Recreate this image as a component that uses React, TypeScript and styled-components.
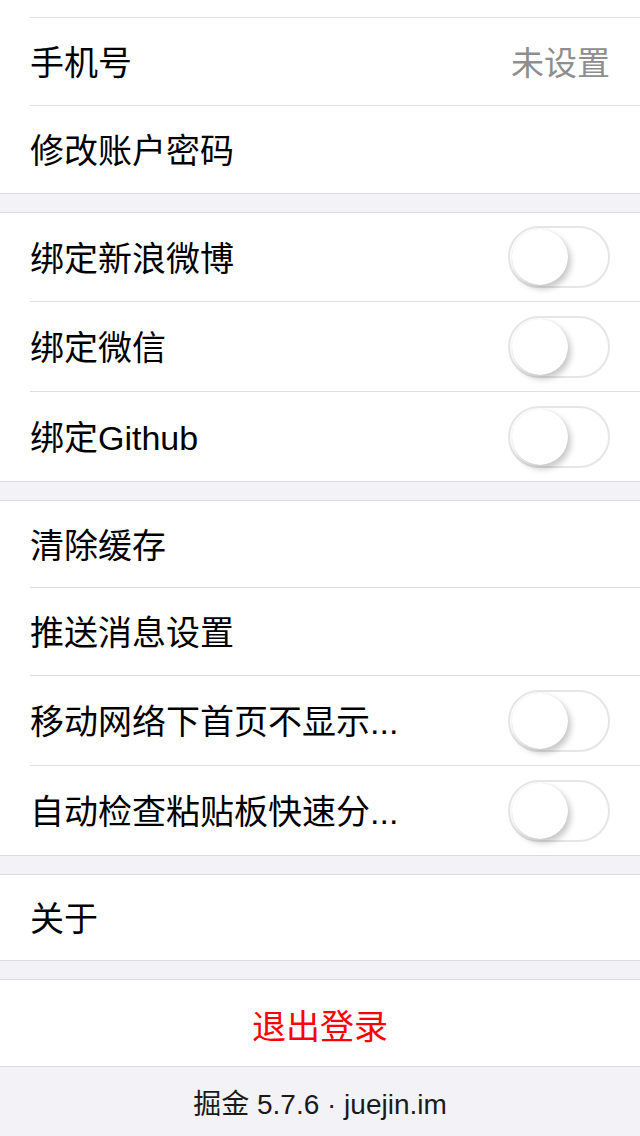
import React from "react";
import styled, { createGlobalStyle } from "styled-components";

const Global = createGlobalStyle`
  html, body { margin: 0; padding: 0; background: #f3f3f7; }
  body { font-family: "Liberation Sans", "Noto Sans CJK SC", sans-serif; color: #000; }
  * { box-sizing: border-box; }
`;

const Page = styled.div`
  width: 640px;
  min-height: 1136px;
  display: flex;
  flex-direction: column;
  background: #f3f3f7;
`;

const Group = styled.div<{ $noTop?: boolean }>`
  background: #fff;
  border-top: ${(p) => (p.$noTop ? "none" : "1px solid #dcdce0")};
  border-bottom: 1px solid #dcdce0;
  & + & {
    margin-top: 18px;
  }
`;

const Row = styled.div`
  padding-left: 30px;
  &:last-child > div {
    border-bottom: none;
  }
`;

const RowInner = styled.div<{ $h: number }>`
  box-sizing: content-box;
  height: ${(p) => p.$h}px;
  display: flex;
  align-items: center;
  justify-content: space-between;
  padding-right: 30px;
  border-bottom: 1px solid #e0e0e0;
`;

const Label = styled.span`
  font-size: 34px;
  line-height: 1;
  padding-top: 3px;
  white-space: nowrap;
`;

const Value = styled.span`
  font-size: 33px;
  line-height: 1;
  padding-top: 3px;
  color: #8e8e8e;
`;

const Track = styled.div`
  width: 102px;
  height: 62px;
  border-radius: 31px;
  border: 2px solid #e6e6e6;
  background: #fff;
  display: flex;
  align-items: center;
  padding-left: 2px;
`;

const Knob = styled.div`
  width: 56px;
  height: 56px;
  border-radius: 50%;
  background: #fff;
  box-shadow: 3px 4px 6px rgba(0, 0, 0, 0.22), 0 0 1px rgba(0, 0, 0, 0.12);
`;

const Logout = styled.div`
  height: 86px;
  padding-top: 3px;
  display: flex;
  align-items: center;
  justify-content: center;
  font-size: 34px;
  color: #ff0000;
`;

const Footer = styled.div`
  flex: 1;
  display: flex;
  align-items: center;
  justify-content: center;
  min-height: 67px;
  font-size: 28px;
  color: #1a1a1a;
`;

const Toggle = () => (
  <Track>
    <Knob />
  </Track>
);

type ItemProps = { label: string; value?: string; toggle?: boolean; h?: number };

const Item = ({ label, value, toggle, h }: ItemProps) => (
  <Row>
    <RowInner $h={h ?? (toggle ? 89 : 87)}>
      <Label>{label}</Label>
      {value && <Value>{value}</Value>}
      {toggle && <Toggle />}
    </RowInner>
  </Row>
);

export default function App() {
  return (
    <>
      <Global />
      <Page>
        <Group $noTop>
          <Row>
            <RowInner $h={17} />
          </Row>
          <Item label="手机号" value="未设置" />
          <Item label="修改账户密码" />
        </Group>
        <Group>
          <Item label="绑定新浪微博" toggle h={88} />
          <Item label="绑定微信" toggle />
          <Item label="绑定Github" toggle />
        </Group>
        <Group>
          <Item label="清除缓存" h={86} />
          <Item label="推送消息设置" />
          <Item label="移动网络下首页不显示..." toggle />
          <Item label="自动检查粘贴板快速分..." toggle />
        </Group>
        <Group>
          <Item label="关于" h={85} />
        </Group>
        <Group>
          <Logout>退出登录</Logout>
        </Group>
        <Footer>掘金 5.7.6 · juejin.im</Footer>
      </Page>
    </>
  );
}
